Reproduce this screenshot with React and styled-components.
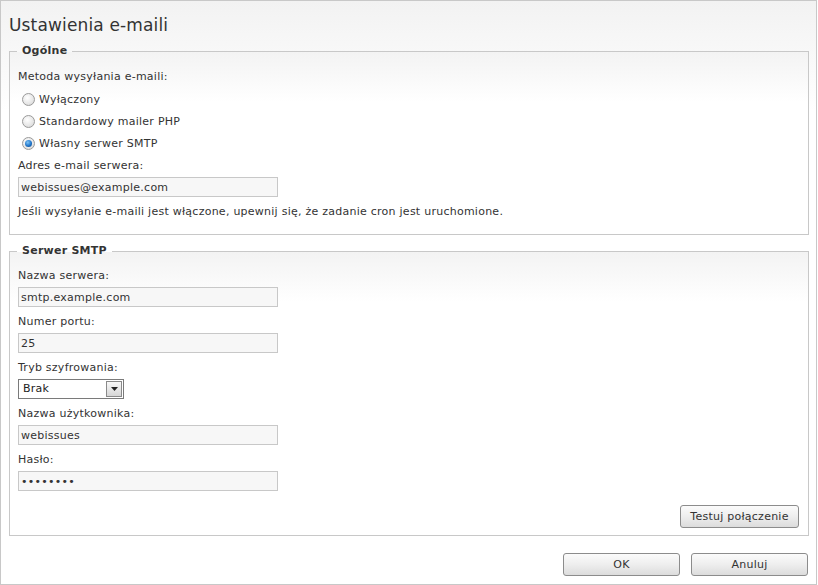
import React from 'react'
import styled, { createGlobalStyle } from 'styled-components'

const GlobalStyle = createGlobalStyle`
  html, body { margin: 0; padding: 0; background: #fff; }
  body { font-family: "DejaVu Sans", Verdana, sans-serif; font-size: 11px; letter-spacing: 0.25px; color: #333; }
`

export default function App() {
  return (
    <>
      <GlobalStyle />
      <Window>
        <Title>Ustawienia e-maili</Title>

        <Group>
          <Legend>Ogólne</Legend>
          <Label first>Metoda wysyłania e-maili:</Label>
          <RadioList>
            <RadioRow>
              <Radio />
              <span>Wyłączony</span>
            </RadioRow>
            <RadioRow>
              <Radio />
              <span>Standardowy mailer PHP</span>
            </RadioRow>
            <RadioRow>
              <Radio checked />
              <span>Własny serwer SMTP</span>
            </RadioRow>
          </RadioList>
          <Label>Adres e-mail serwera:</Label>
          <Input readOnly value="webissues@example.com" />
          <Note>Jeśli wysyłanie e-maili jest włączone, upewnij się, że zadanie cron jest uruchomione.</Note>
        </Group>

        <Group smtp>
          <Legend>Serwer SMTP</Legend>
          <Label>Nazwa serwera:</Label>
          <Input readOnly value="smtp.example.com" />
          <Label>Numer portu:</Label>
          <Input readOnly value="25" />
          <Label>Tryb szyfrowania:</Label>
          <Select>
            <SelectText>Brak</SelectText>
            <SelectArrow>
              <svg width="7" height="4" viewBox="0 0 7 4">
                <path d="M0 0h7L3.5 4z" fill="#222" />
              </svg>
            </SelectArrow>
          </Select>
          <Label>Nazwa użytkownika:</Label>
          <Input readOnly value="webissues" />
          <Label>Hasło:</Label>
          <Input readOnly type="password" value="password" />
          <ButtonRow>
            <Button wide>Testuj połączenie</Button>
          </ButtonRow>
        </Group>

        <Footer>
          <Button>OK</Button>
          <Button>Anuluj</Button>
        </Footer>
      </Window>
    </>
  )
}

const Window = styled.div`
  box-sizing: border-box;
  width: 817px;
  height: 585px;
  border: 1px solid #c8c8c8;
  padding: 13px 7px 0 8px;
  background: linear-gradient(#f2f2f2 0px, #ffffff 110px);
`
const Title = styled.h1`
  margin: 0 0 8px 0;
  font-weight: normal;
  font-size: 17px;
  letter-spacing: 0.15px;
  line-height: 22px;
  color: #333;
`
const Group = styled.fieldset`
  margin: ${p => (p.smtp ? '9px' : '0')} 0 0 0;
  padding: ${p => (p.smtp ? '10px 9px 7px 8px' : '9px 9px 14px 8px')};
  border: 1px solid #c8c8c8;
  background: linear-gradient(#f3f3f3 0px, #ffffff 50px);
  min-width: 0;
`
const Legend = styled.legend`
  padding: 0 5px;
  margin-left: -1px;
  font-weight: bold;
  font-size: 11px;
  line-height: 14px;
  color: #333;
`
const Label = styled.div`
  line-height: 16px;
  margin: ${p => (p.first ? '2px' : '0')} 0 3px 0;
`
const RadioList = styled.div`
  display: flex;
  flex-direction: column;
  margin: 3px 0 4px 0;
`
const RadioRow = styled.label`
  display: flex;
  align-items: center;
  gap: 4px;
  height: 22px;
  padding-left: 4px;
`
const Radio = styled.span`
  box-sizing: border-box;
  width: 13px;
  height: 13px;
  border-radius: 50%;
  border: 1px solid #9a9a9a;
  background: radial-gradient(circle at 40% 35%, #ffffff 0%, #e6e6e6 60%, #cfcfcf 100%);
  display: flex;
  align-items: center;
  justify-content: center;
  &::after {
    content: '';
    display: ${p => (p.checked ? 'block' : 'none')};
    width: 7px;
    height: 7px;
    border-radius: 50%;
    background: radial-gradient(circle at 40% 35%, #7fc4f5 0%, #1f74c9 55%, #0b3f7a 100%);
  }
`
const Input = styled.input`
  display: block;
  box-sizing: border-box;
  width: 260px;
  height: 20px;
  margin: 0 0 7px 0;
  padding: 0 2px;
  border: 1px solid #c8c8c8;
  background: #f7f7f7;
  font-family: "DejaVu Sans", Verdana, sans-serif;
  font-size: 11px;
  letter-spacing: 0.25px;
  color: #333;
  outline: none;
`
const Note = styled.div`
  line-height: 16px;
`
const Select = styled.div`
  box-sizing: border-box;
  display: flex;
  align-items: center;
  justify-content: space-between;
  width: 106px;
  height: 20px;
  margin: 0 0 7px 0;
  padding: 0 1px 0 4px;
  border: 1px solid #7a7a7a;
  background: #fff;
  color: #222;
`
const SelectText = styled.span`
  line-height: 16px;
`
const SelectArrow = styled.span`
  box-sizing: border-box;
  display: flex;
  align-items: center;
  justify-content: center;
  width: 16px;
  height: 16px;
  border: 1px solid #8a8a8a;
  background: linear-gradient(#f8f8f8, #d6d6d6);
`
const ButtonRow = styled.div`
  display: flex;
  justify-content: flex-end;
  margin-top: 14px;
`
const Button = styled.button`
  box-sizing: border-box;
  width: ${p => (p.wide ? '119px' : '117px')};
  height: 23px;
  padding: 0;
  border: 1px solid #8c8c8c;
  border-radius: 3px;
  background: linear-gradient(#fbfbfb 0%, #eeeeee 50%, #dcdcdc 100%);
  font-family: "DejaVu Sans", Verdana, sans-serif;
  font-size: 11px;
  font-weight: normal;
  letter-spacing: 0.25px;
  color: #333;
`
const Footer = styled.div`
  display: flex;
  justify-content: flex-end;
  gap: 11px;
  margin-top: 17px;
  padding-right: 1px;
`
